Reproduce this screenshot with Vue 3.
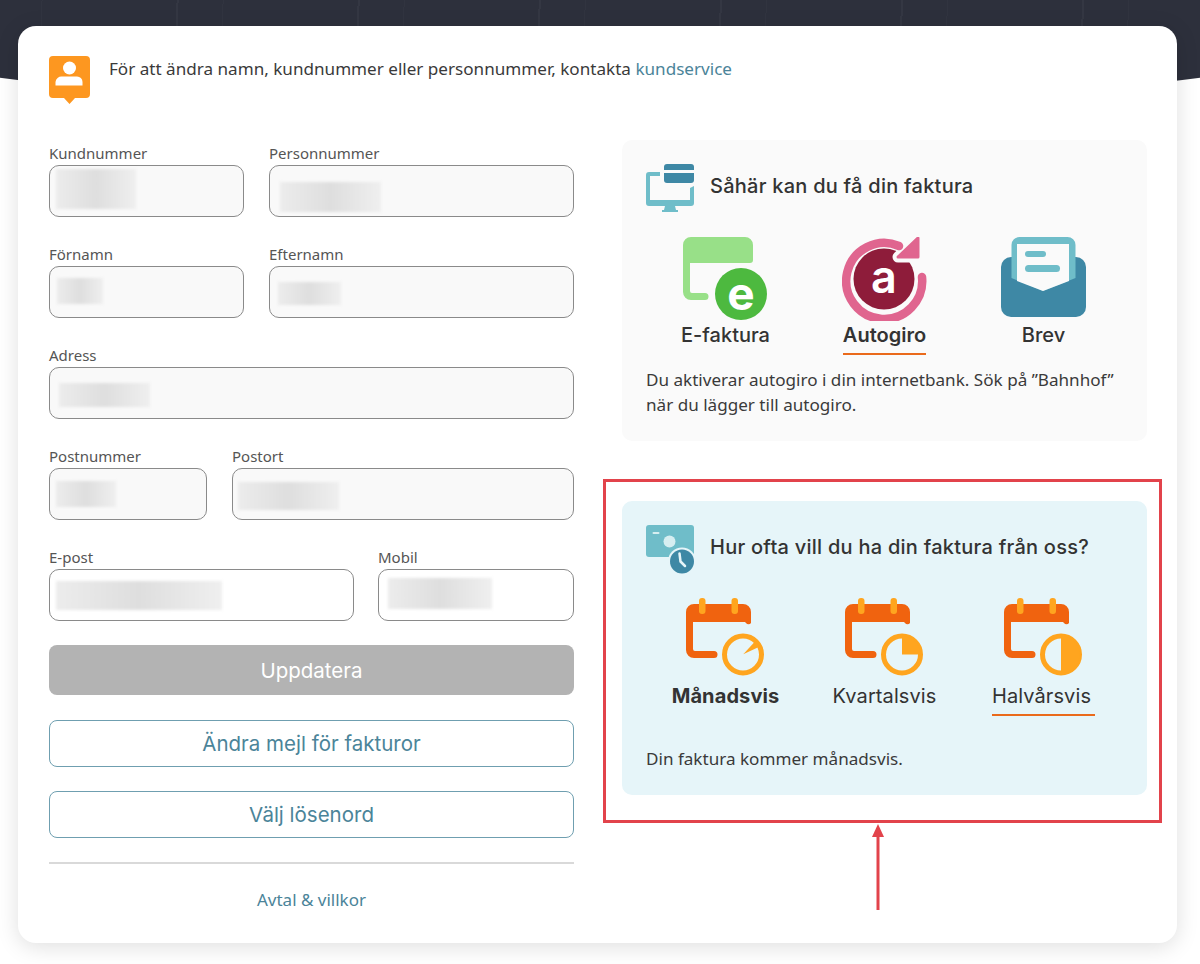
<template>
  <div class="page">
    <div class="header-bg"></div>
    <div class="card">
      <div class="notice">
        <svg class="notice-icon" viewBox="0 0 41 48" width="41" height="48">
          <path d="M4 0h33a4 4 0 0 1 4 4v34a4 4 0 0 1-4 4h-11l-5.500 6-5.500-6H4a4 4 0 0 1-4-4V4a4 4 0 0 1 4-4z" fill="#fd9720" />
          <circle cx="20.500" cy="12" r="6.500" fill="#fff" />
          <path d="M13 20.500h15a5.500 5.500 0 0 1 5.500 5.500v3.500h-27V26a6 6 0 0 1 6.500-5.500z" fill="#fff" />
        </svg>
        <p>För att ändra namn, kundnummer eller personnummer, kontakta <a href="#">kundservice</a></p>
      </div>

      <div class="columns">
        <form class="form" @submit.prevent>
          <div v-for="(row, index) in rows" :key="index" class="row" :class="row.cls">
            <div v-for="field in row.fields" :key="field.label" class="field">
              <label>{{ field.label }}</label>
              <div class="input" :class="{ plain: field.plain }">
                <span class="blur" :style="{ left: field.x + 'px', top: field.y + 'px', width: field.w + 'px', height: field.h + 'px' }"></span>
              </div>
            </div>
          </div>

          <button class="btn update">Uppdatera</button>
          <button class="btn outline">Ändra mejl för fakturor</button>
          <button class="btn outline">Välj lösenord</button>
          <hr />
          <a class="terms" href="#">Avtal &amp; villkor</a>
        </form>

        <div class="side">
          <section class="panel first">
            <div class="panel-head">
              <svg viewBox="0 0 48 48" width="48" height="48">
                <path d="M14 8H3a3 3 0 0 0-3 3v28a3 3 0 0 0 3 3h42a3 3 0 0 0 3-3V22l-4 2v12H4V12h10z" fill="#6fbdc9" />
                <path d="M19 42h10l1 4h2v2H16v-2h2z" fill="#6fbdc9" />
                <path d="M21 0h24a3 3 0 0 1 3 3v3H18V3a3 3 0 0 1 3-3z" fill="#3e88a5" />
                <path d="M18 9h30v7a3 3 0 0 1-3 3H21a3 3 0 0 1-3-3z" fill="#3e88a5" />
              </svg>
              <h2>Såhär kan du få din faktura</h2>
            </div>
            <div class="options">
              <div class="option">
                <svg viewBox="0 0 85 84" width="85" height="84">
                  <path d="M8 0h54a8 8 0 0 1 8 8v15a3 3 0 0 1-3 3H7v28a2 2 0 0 0 2 2h13a3.500 3.500 0 0 1 0 7H8a8 8 0 0 1-8-8V8a8 8 0 0 1 8-8z" fill="#98e088" />
                  <circle cx="58" cy="57" r="26" fill="#4db93f" />
                  <text x="58" y="73" text-anchor="middle" class="glyph">e</text>
                </svg>
                <span>E-faktura</span>
              </div>
              <div class="option active">
                <svg viewBox="0 0 85 84" width="85" height="84">
                  <g transform="translate(42 42)">
                    <circle r="30.500" fill="#8e1c3a" />
                    <path d="M34-41V-22H14z" fill="#fafafa" stroke="#fafafa" stroke-width="11" stroke-linejoin="round" />
                    <path d="M15-33A38 38 0 1 0 38-2" fill="none" stroke="#e0658f" stroke-width="8.500" stroke-linecap="round" />
                    <path d="M34-41V-22H14z" fill="#e0658f" stroke="#e0658f" stroke-width="3" stroke-linejoin="round" />
                    <text y="14" text-anchor="middle" class="glyph a">a</text>
                  </g>
                </svg>
                <span>Autogiro</span>
              </div>
              <div class="option">
                <svg viewBox="0 0 85 84" width="85" height="84">
                  <rect x="0" y="20" width="85" height="60" rx="10" fill="#3e88a5" />
                  <path d="M10.500 8a8 8 0 0 1 8-8h48a8 8 0 0 1 8 8v33L42 54 10.500 41z" fill="#6fbdc9" />
                  <path d="M16 7h52v37L42 54 16 44z" fill="#fafafa" />
                  <rect x="24" y="14" width="21" height="6" rx="3" fill="#6fbdc9" />
                  <rect x="24" y="28" width="35" height="7" rx="3.500" fill="#6fbdc9" />
                </svg>
                <span>Brev</span>
              </div>
            </div>
            <p class="panel-text">Du aktiverar autogiro i din internetbank. Sök på ”Bahnhof” när du lägger till autogiro.</p>
          </section>

          <section class="panel second">
            <div class="panel-head">
              <svg class="clock-icon" viewBox="0 0 50 50" width="50" height="50">
                <rect width="48" height="32" rx="3" fill="#6fbdc9" />
                <rect x="6.500" y="7" width="7" height="2" rx="1" fill="#d6eef1" />
                <circle cx="23.500" cy="16.500" r="6" fill="#d6eef1" />
                <circle cx="36" cy="36.500" r="14" fill="#e6f5f9" />
                <circle cx="36" cy="36.500" r="12" fill="#3e88a5" />
                <path d="M33.500 28.500l1 8 4.500 4.500" fill="none" stroke="#e6f5f9" stroke-width="2.500" stroke-linecap="round" stroke-linejoin="round" />
              </svg>
              <h2>Hur ofta vill du ha din faktura från oss?</h2>
            </div>
            <div class="options freq">
              <div v-for="item in periods" :key="item.name" class="option" :class="item.cls">
                <svg viewBox="0 0 79 78" width="79" height="78">
                  <path d="M8 6h49a8 8 0 0 1 8 8v11a3 3 0 0 1-5 0l-1-1H7v27a2 2 0 0 0 2 2h19a3.500 3.500 0 0 1 0 7H8a8 8 0 0 1-8-8V14a8 8 0 0 1 8-8z" fill="#f0630f" />
                  <rect x="13" y="0" width="6.500" height="16" rx="3" fill="#ffa51f" />
                  <rect x="45.500" y="0" width="6.500" height="16" rx="3" fill="#ffa51f" />
                  <circle cx="57" cy="56.500" r="18.500" fill="none" stroke="#ffa51f" stroke-width="5" />
                  <path :d="item.fill" fill="#ffa51f" />
                </svg>
                <span>{{ item.name }}</span>
              </div>
            </div>
            <p class="panel-text">Din faktura kommer månadsvis.</p>

            <div class="highlight"></div>
            <svg class="arrow" viewBox="0 0 14 86" width="14" height="86">
              <path d="M7 86V4" stroke="#e2434b" stroke-width="3" fill="none" />
              <path d="M7 0l6 13H1z" fill="#e2434b" />
            </svg>
          </section>
        </div>
      </div>
    </div>
  </div>
</template>

<script setup>
const rows = [
  {
    cls: 'r1',
    fields: [
      { label: 'Kundnummer', x: 6, y: 3, w: 80, h: 40 },
      { label: 'Personnummer', x: 10, y: 16, w: 101, h: 30 },
    ],
  },
  {
    cls: 'r1',
    fields: [
      { label: 'Förnamn', x: 7, y: 11, w: 46, h: 26 },
      { label: 'Efternamn', x: 8, y: 15, w: 63, h: 23 },
    ],
  },
  {
    cls: 'r2',
    fields: [{ label: 'Adress', x: 9, y: 15, w: 91, h: 24 }],
  },
  {
    cls: 'r3',
    fields: [
      { label: 'Postnummer', x: 6, y: 12, w: 60, h: 26 },
      { label: 'Postort', x: 5, y: 13, w: 101, h: 28 },
    ],
  },
  {
    cls: 'r4',
    fields: [
      { label: 'E-post', x: 6, y: 11, w: 166, h: 29, plain: true },
      { label: 'Mobil', x: 9, y: 8, w: 104, h: 31, plain: true },
    ],
  },
];

const periods = [
  { name: 'Månadsvis', cls: 'bold', fill: 'M57.300 56.300L69.400 42.900L73.800 48.500z' },
  { name: 'Kvartalsvis', cls: '', fill: 'M57 56.500V38a18.500 18.500 0 0 1 18.500 18.500z' },
  { name: 'Halvårsvis', cls: 'active', fill: 'M57 38a18.500 18.500 0 0 1 0 37z' },
];
</script>

<style>
html,
body {
  margin: 0;
  background: #fff;
}
</style>

<style scoped>
.page {
  position: relative;
  width: 1200px;
  height: 964px;
  overflow: hidden;
  padding: 26px 0 0 18px;
  box-sizing: border-box;
  font-family: "Noto Sans", "Liberation Sans", sans-serif;
  color: #333;
}

.header-bg {
  position: absolute;
  top: -426px;
  left: -600px;
  width: 2400px;
  height: 540px;
  border-radius: 50%;
  background:
    repeating-linear-gradient(92deg, transparent 0 67px, rgba(255, 255, 255, 0.035) 67px 69px, transparent 69px 113px, rgba(255, 255, 255, 0.02) 113px 114px, transparent 114px 181px),
    #2d303c;
}

.card {
  position: relative;
  width: 1159px;
  height: 917px;
  box-sizing: border-box;
  padding: 30px 30px 0 31px;
  background: #fff;
  border-radius: 18px;
  box-shadow: 0 4px 22px rgba(0, 0, 0, 0.13);
}

.notice {
  display: flex;
  gap: 19px;
  height: 84px;
}

.notice-icon {
  flex: none;
}

.notice p {
  margin: 0;
  padding-top: 1px;
  font-size: 17.100px;
  line-height: 24px;
  color: #3a3a3a;
}

.notice a,
.terms {
  color: #4b8499;
  text-decoration: none;
}

.columns {
  display: grid;
  grid-template-columns: 525px 525px;
  column-gap: 48px;
}

.form {
  display: flex;
  flex-direction: column;
  margin-top: 3px;
}

.row {
  display: grid;
  column-gap: 25px;
  margin-bottom: 27px;
}

.row.r1 {
  grid-template-columns: 195px 305px;
}

.row.r2 {
  grid-template-columns: 1fr;
}

.row.r3 {
  grid-template-columns: 158px 342px;
}

.row.r4 {
  grid-template-columns: 305px 196px;
  column-gap: 24px;
  margin-bottom: 24px;
}

.field label {
  display: block;
  height: 22px;
  font-size: 15px;
  line-height: 20px;
  color: #555;
}

.input {
  position: relative;
  height: 52px;
  box-sizing: border-box;
  background: #f9f9f9;
  border: 1px solid #8a8a8a;
  border-radius: 10px;
}

.input.plain {
  background: #fff;
}

.blur {
  position: absolute;
  background: linear-gradient(90deg, #ececec, #dedede 50%, #efefef);
  filter: blur(1.5px);
}

.btn {
  width: 100%;
  box-sizing: border-box;
  font-family: Inter, "Liberation Sans", sans-serif;
  font-size: 20.500px;
  border-radius: 8px;
  cursor: pointer;
}

.update {
  height: 50px;
  margin-bottom: 25px;
  border: none;
  background: #b3b3b3;
  color: #fff;
}

.outline {
  height: 47px;
  margin-bottom: 24px;
  border: 1px solid #6f9fb0;
  background: #fff;
  color: #4b8499;
}

hr {
  width: 100%;
  margin: 0;
  border: none;
  border-top: 2px solid #d9d9d9;
}

.terms {
  margin-top: 24px;
  text-align: center;
  font-size: 17px;
  line-height: 24px;
}

.side {
  display: flex;
  flex-direction: column;
  gap: 60px;
}

.panel {
  position: relative;
  box-sizing: border-box;
  padding: 24px 24px 0;
  border-radius: 10px;
}

.panel.first {
  height: 301px;
  background: #fafafa;
}

.panel.second {
  height: 294px;
  background: #e6f5f9;
}

.panel-head {
  display: flex;
  align-items: center;
  gap: 16px;
  height: 48px;
}

.panel-head svg {
  flex: none;
}

.panel-head .clock-icon {
  margin: 0 -2px -2px 0;
}

.panel-head h2 {
  margin: 0 0 5px;
  font-family: Inter, "Liberation Sans", sans-serif;
  font-size: 20px;
  font-weight: 500;
  letter-spacing: 0.25px;
  color: #333;
}

.options {
  display: grid;
  grid-template-columns: repeat(3, 1fr);
  margin-top: 25px;
}

.option {
  display: flex;
  flex-direction: column;
  align-items: center;
}

.option svg {
  display: block;
}

.option span {
  padding: 0 0 4px;
  border-bottom: 2px solid transparent;
  font-family: Inter, "Liberation Sans", sans-serif;
  font-size: 20px;
  font-weight: 500;
  line-height: 28px;
  color: #333;
}

.freq .option span {
  margin-top: 6px;
  font-weight: 400;
  letter-spacing: 0.1px;
}

.option.active span {
  border-bottom-color: #ea6a1b;
}

.freq .option.active span {
  padding: 0 4px 4px 0;
}

.freq .option.bold span {
  font-weight: 700;
}

.first .option.active span {
  font-weight: 600;
}

.glyph {
  font-family: Inter, "Liberation Sans", sans-serif;
  font-size: 46px;
  font-weight: 700;
  fill: #fff;
}

.glyph.a {
  font-size: 45px;
  font-weight: 600;
}

.panel-text {
  margin: 12px 0 0;
  font-size: 17.100px;
  line-height: 25px;
  color: #3a3a3a;
}

.second .panel-text {
  margin-top: 30px;
}

.highlight {
  position: absolute;
  left: -19px;
  right: -15px;
  top: -22px;
  bottom: -28px;
  border: 3px solid #e2434b;
  pointer-events: none;
}

.arrow {
  position: absolute;
  left: 249px;
  top: 323px;
}
</style>
